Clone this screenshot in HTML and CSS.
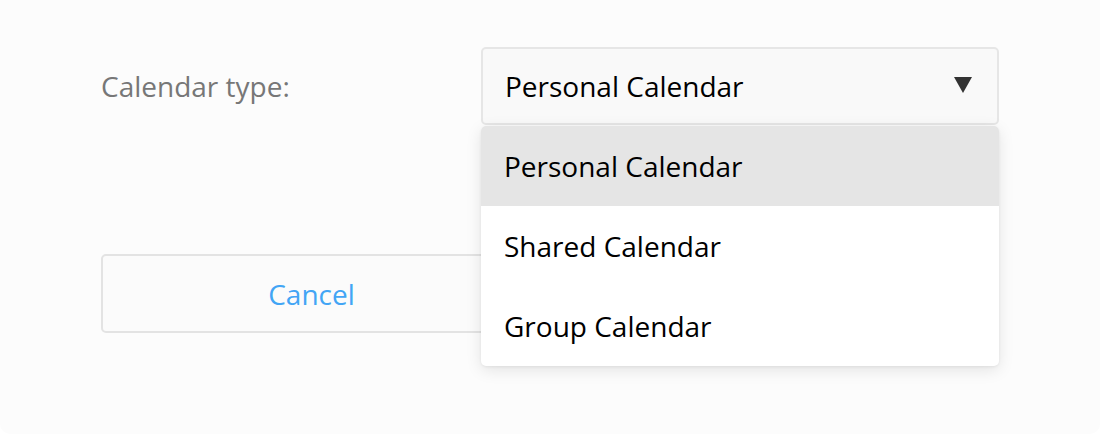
FILE: index.html
```html
<!DOCTYPE html>
<html>
<head>
<meta charset="utf-8">
<link rel="stylesheet" href="styles.css">
</head>
<body>
<div class="dialog">
  <div class="field-row">
    <label class="field-label">Calendar type:</label>
    <div class="select-wrap">
      <div class="select">
        <span class="select-value">Personal Calendar</span>
        <svg class="caret" width="18" height="16" viewBox="0 0 18 16"><path d="M0 0 H18 L9 16 Z" fill="#333"/></svg>
      </div>
      <ul class="menu">
        <li class="menu-item active">Personal Calendar</li>
        <li class="menu-item">Shared Calendar</li>
        <li class="menu-item">Group Calendar</li>
      </ul>
    </div>
  </div>
  <div class="actions">
    <button class="btn btn-cancel">Cancel</button>
  </div>
</div>
</body>
</html>
```

FILE: styles.css
```css
* { box-sizing: border-box; }
html, body { margin: 0; padding: 0; background: #ffffff; }
body {
  font-family: "Open Sans", "Noto Sans", sans-serif;
  width: 1100px;
  height: 434px;
  overflow: hidden;
}
.dialog {
  width: 1100px;
  height: 434px;
  background: #fcfcfc;
  border-radius: 0 0 10px 10px;
  padding: 47px 101px 0 101px;
}
.field-row {
  display: flex;
  align-items: center;
}
.field-label {
  width: 380px;
  font-size: 28px;
  color: #777777;
}
.select-wrap {
  position: relative;
  width: 518px;
}
.select {
  height: 78px;
  border: 2px solid #e6e6e6;
  border-radius: 5px;
  background: #f9f9f9;
  display: flex;
  align-items: center;
  justify-content: space-between;
  padding: 0 25px 0 22px;
  font-size: 28px;
  color: #000;
}
.caret { display: block; margin-top: -2px; }
.menu {
  position: absolute;
  top: 79px;
  left: 0;
  width: 518px;
  margin: 0;
  padding: 0;
  list-style: none;
  background: #ffffff;
  border-radius: 5px;
  box-shadow: 0 4px 16px rgba(0,0,0,0.10), 0 1px 3px rgba(0,0,0,0.06);
  overflow: hidden;
  z-index: 10;
}
.menu-item {
  height: 80px;
  display: flex;
  align-items: center;
  padding: 0 23px;
  font-size: 28px;
  color: #000;
}
.menu-item.active { background: #e5e5e5; }
.actions {
  margin-top: 129px;
  display: flex;
}
.btn {
  width: 421px;
  height: 79px;
  border: 2px solid #e3e3e3;
  border-radius: 5px;
  background: #fbfbfb;
  font-family: inherit;
  font-size: 28px;
  color: #42a5f5;
  padding: 0;
}
```
